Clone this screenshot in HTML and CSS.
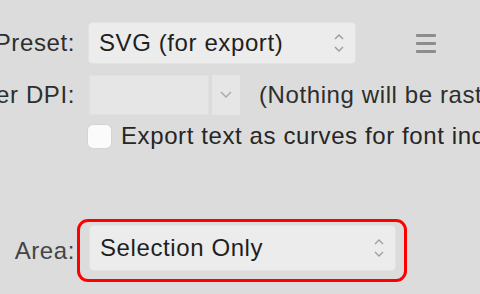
FILE: index.html
```html
<!DOCTYPE html>
<html lang="en">

<head>
  <meta charset="UTF-8">
  <meta name="viewport" content="width=device-width, initial-scale=1.0">
  <title>Export</title>
  <link rel="stylesheet" href="styles.css">
</head>

<body>
  <div class="panel">
    <div class="row row-preset">
      <label class="label">Preset:</label>
      <div class="select select-preset">
        <span class="select-text">SVG (for export)</span>
        <svg class="updown" width="12" height="22" viewBox="0 0 12 22">
          <path d="M2 7 L6 3 L10 7" fill="none" stroke="#9a9a9a" stroke-width="1.4"/>
          <path d="M2 15 L6 19 L10 15" fill="none" stroke="#9a9a9a" stroke-width="1.4"/>
        </svg>
      </div>
      <div class="menu-icon">
        <span></span><span></span><span></span>
      </div>
    </div>

    <div class="row row-dpi">
      <label class="label">Raster DPI:</label>
      <div class="combo">
        <div class="combo-field"></div>
        <div class="combo-button">
          <svg width="14" height="10" viewBox="0 0 14 10">
            <path d="M2 2 L7 7 L12 2" fill="none" stroke="#a8a8a8" stroke-width="1.4"/>
          </svg>
        </div>
      </div>
      <span class="note">(Nothing will be rasterized)</span>
    </div>

    <div class="row row-check">
      <span class="checkbox"></span>
      <span class="check-text">Export text as curves for font independence</span>
    </div>

    <div class="row row-area">
      <label class="label label-area">Area:</label>
      <div class="highlight">
        <div class="select select-area">
          <span class="select-text">Selection Only</span>
          <svg class="updown" width="12" height="22" viewBox="0 0 12 22">
            <path d="M2 7 L6 3 L10 7" fill="none" stroke="#a0a0a0" stroke-width="1.4"/>
            <path d="M2 15 L6 19 L10 15" fill="none" stroke="#a0a0a0" stroke-width="1.4"/>
          </svg>
        </div>
      </div>
    </div>
  </div>
</body>

</html>
```

FILE: styles.css
```css
html,
body {
  margin: 0;
  padding: 0;
  height: 100%;
  overflow: hidden;
}

body {
  background: #dcdcdc;
  font-family: 'Liberation Sans', Arial, sans-serif;
  font-size: 24px;
  letter-spacing: 0.6px;
  color: #262626;
}

.panel {
  padding-top: 23px;
  white-space: nowrap;
}

.row {
  display: flex;
  align-items: center;
}

/* labels are right aligned and spill off the left edge */
.label {
  flex: none;
  width: 75px;
  min-width: 0;
  display: flex;
  justify-content: flex-end;
  margin-right: 14px;
  color: #2e2e2e;
}

/* popup selects */
.select {
  flex: none;
  display: flex;
  align-items: center;
  justify-content: space-between;
  box-sizing: border-box;
  background: #ececec;
  border-radius: 4px;
  box-shadow: 0 0 0 1px #e2e2e2;
}

.select-text {
  color: #1f1f1f;
}

.select-preset {
  width: 266px;
  height: 40px;
  padding: 0 10px 0 10px;
}

.updown {
  display: block;
}

.menu-icon {
  flex: none;
  display: flex;
  flex-direction: column;
  gap: 5px;
  margin-left: 61px;
  width: 20px;
}

.menu-icon span {
  display: block;
  height: 3px;
  background: #8c8c8c;
  border-radius: 1px;
}

/* dpi row */
.row-dpi {
  margin-top: 12px;
}

.combo {
  flex: none;
  display: flex;
  gap: 3px;
  height: 40px;
}

.combo-field {
  width: 120px;
  background: #e6e6e6;
  box-shadow: inset 0 0 0 1px #e0e0e0;
}

.combo-button {
  width: 28px;
  display: flex;
  align-items: center;
  justify-content: center;
  background: #e6e6e6;
}

.note {
  flex: none;
  margin-left: 19px;
  color: #2e2e2e;
}

/* checkbox row */
.row-check {
  margin-top: 7px;
  padding-left: 88px;
}

.checkbox {
  flex: none;
  width: 23px;
  height: 23px;
  background: #fbfbfb;
  border-radius: 5px;
  box-shadow: 0 0 0 1px #d4d4d4;
}

.check-text {
  flex: none;
  margin-left: 10px;
  color: #262626;
}

/* area row */
.row-area {
  margin-top: 69px;
}

.label-area {
  margin-right: 2px;
  color: #454545;
}

.highlight {
  flex: none;
  border: 3px solid #ff0000;
  border-radius: 11px;
  padding: 4px 9px 9px 10px;
}

.select-area {
  width: 305px;
  height: 44px;
  padding: 0 10px 0 10px;
}
```
